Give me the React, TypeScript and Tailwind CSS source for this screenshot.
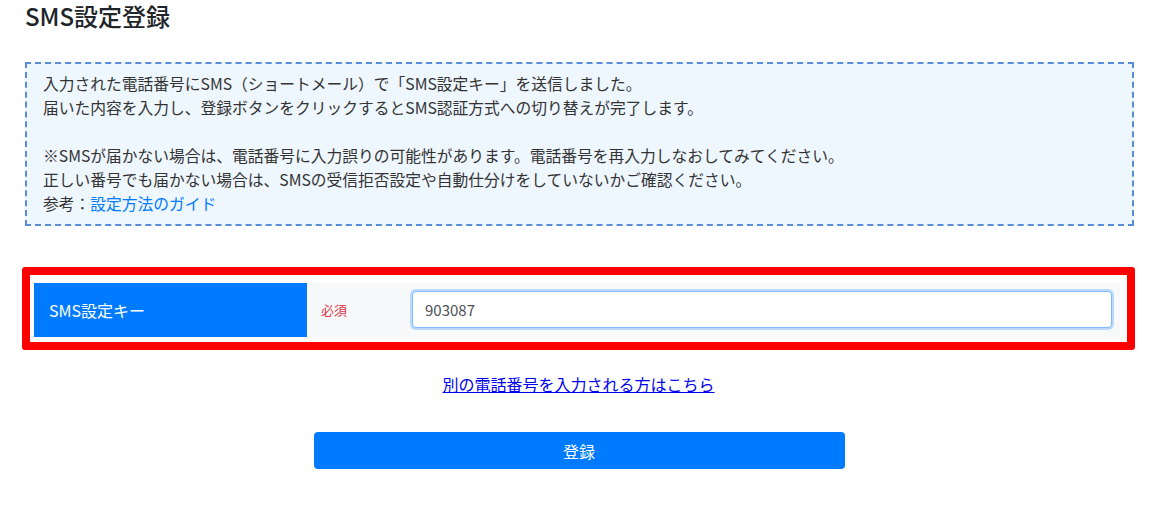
import type { FC } from 'react';
import { useState } from 'react';

const font = { fontFamily: '"Noto Sans CJK JP", "Noto Sans", sans-serif' };

const App: FC = () => {
  const [code, setCode] = useState('903087');

  return (
    <div className="min-h-screen bg-white text-[#333]" style={font}>
      <div className="px-[25px] pr-[23px]">
        <h1 className="text-[24px] leading-[32px] font-medium text-[#212529]">SMS設定登録</h1>

        <div className="mt-[30px] border-2 border-dashed border-[#5a8dd8] bg-[#eef6fe] px-4 py-2 text-[15.75px] leading-[24px]">
          <p>入力された電話番号にSMS（ショートメール）で「SMS設定キー」を送信しました。</p>
          <p>届いた内容を入力し、登録ボタンをクリックするとSMS認証方式への切り替えが完了します。</p>
          <p>&nbsp;</p>
          <p>※SMSが届かない場合は、電話番号に入力誤りの可能性があります。電話番号を再入力しなおしてみてください。</p>
          <p>正しい番号でも届かない場合は、SMSの受信拒否設定や自動仕分けをしていないかご確認ください。</p>
          <p>
            参考：<a href="#" className="text-[#007bff]">設定方法のガイド</a>
          </p>
        </div>
      </div>

      <div className="mx-[22px] mt-[41px] rounded-[3px] border-[8px] border-[#ff0000] pt-2 pb-[5px] pl-1 pr-[7px]">
        <div className="flex h-[54px]">
          <div className="flex w-[273px] items-center bg-[#007bff] pl-[15px] text-[16px] text-white">
            SMS設定キー
          </div>
          <div className="flex flex-1 items-center bg-[#f8f9fa] pr-2">
            <span className="w-[105px] pl-[14px] text-[13px] text-[#dc3545]">必須</span>
            <input
              type="text"
              value={code}
              onChange={(e) => setCode(e.target.value)}
              className="mb-[2px] h-[37px] flex-1 rounded-[4px] border border-[#80bdff] bg-white px-3 text-[15px] text-[#495057] shadow-[0_0_0_2px_rgba(0,123,255,0.25)] outline-none"
            />
          </div>
        </div>
      </div>

      <div className="mt-[22px] text-center text-[16px] leading-[24px]">
        <a href="#" className="text-[#0000ee] underline">別の電話番号を入力される方はこちら</a>
      </div>

      <div className="mt-[36px] flex justify-center">
        <button type="button" className="ml-[1px] h-[37px] w-[531px] rounded-[4px] bg-[#007bff] text-[16px] text-white">
          登録
        </button>
      </div>
    </div>
  );
};

export default App;
